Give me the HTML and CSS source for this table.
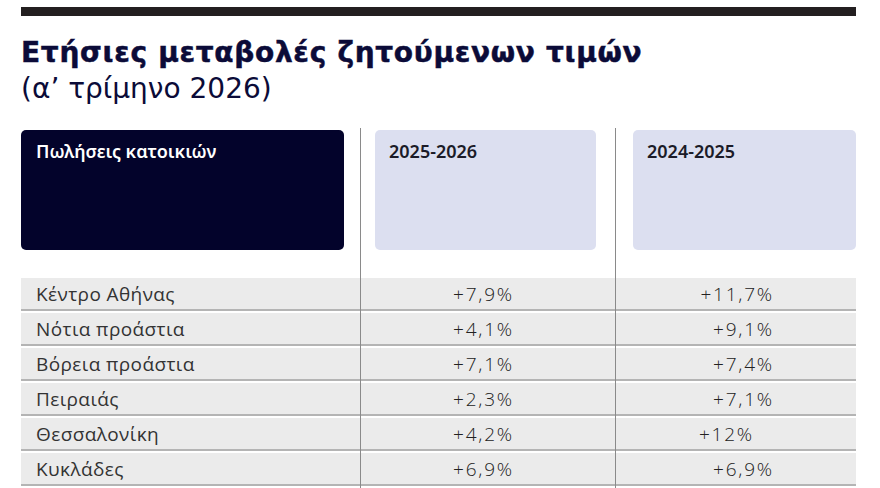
FILE: index.html
```html
<!DOCTYPE html>
<html lang="el">
<head>
<meta charset="utf-8">
<link rel="stylesheet" href="styles.css">
</head>
<body>
<div class="page">
  <div class="bar"></div>
  <h1 class="title">Ετήσιες μεταβολές ζητούμενων τιμών</h1>
  <p class="subtitle">(α’ τρίμηνο 2026)</p>
  <div class="table">
    <div class="vline vline-1"></div>
    <div class="vline vline-2"></div>
    <div class="head">
      <div class="hcell hcell-dark">Πωλήσεις κατοικιών</div>
      <div class="hcell hcell-light">2025-2026</div>
      <div class="hcell hcell-light">2024-2025</div>
    </div>
    <div class="rows">
      <div class="row"><span class="label">Κέντρο Αθήνας</span><span class="v1">+7,9%</span><span class="v2">+11,7%</span></div>
      <div class="row"><span class="label">Νότια προάστια</span><span class="v1">+4,1%</span><span class="v2">+9,1%</span></div>
      <div class="row"><span class="label">Βόρεια προάστια</span><span class="v1">+7,1%</span><span class="v2">+7,4%</span></div>
      <div class="row"><span class="label">Πειραιάς</span><span class="v1">+2,3%</span><span class="v2">+7,1%</span></div>
      <div class="row"><span class="label">Θεσσαλονίκη</span><span class="v1">+4,2%</span><span class="v2 v2-odd">+12%</span></div>
      <div class="row"><span class="label">Κυκλάδες</span><span class="v1">+6,9%</span><span class="v2">+6,9%</span></div>
    </div>
  </div>
</div>
</body>
</html>
```
FILE: styles.css
```css
html, body {
  margin: 0;
  padding: 0;
  background: #ffffff;
}
.page {
  width: 835px;
  padding: 7px 0 0 21px;
}
.bar {
  height: 9px;
  background: #231f20;
}
.title {
  margin: 21px 0 0 0;
  font-family: "DejaVu Sans", sans-serif;
  font-weight: 700;
  font-size: 28px;
  line-height: 32px;
  color: #0b0b38;
  letter-spacing: 0.7px;
  -webkit-text-stroke: 0.5px #0b0b38;
}
.subtitle {
  margin: 4px 0 0 0;
  font-family: "DejaVu Sans", sans-serif;
  font-weight: 400;
  font-size: 28px;
  line-height: 32px;
  color: #0b0b38;
}
.table {
  position: relative;
  margin-top: 25px;
}
.vline {
  position: absolute;
  top: -2px;
  bottom: -4px;
  width: 1px;
  background: #8a8a8a;
}
.vline-1 { left: 339px; }
.vline-2 { left: 594px; }
.head {
  display: grid;
  grid-template-columns: 323px 221px 223px;
  column-gap: 31px;
  height: 120px;
}
.head .hcell:nth-child(3) {
  margin-left: 6px;
  margin-right: -6px;
}
.hcell {
  border-radius: 5px;
  padding: 8px 14px;
  font-family: "Noto Sans", sans-serif;
  font-weight: 600;
  font-size: 18px;
  line-height: 26px;
}
.hcell-dark {
  background: #03032b;
  color: #ffffff;
  padding-left: 15px;
}
.hcell-light {
  background: #dcdff0;
  color: #1b1b28;
}
.rows {
  margin-top: 28px;
}
.row {
  display: grid;
  grid-template-columns: 339px 255px 1fr;
  height: 31px;
  align-items: center;
  background: #ebebeb;
  border-bottom: 2px solid #b4b4b4;
  margin-bottom: 2px;
  font-family: "Open Sans", sans-serif;
  font-weight: 400;
  font-size: 19px;
  color: #333333;
}
.label {
  padding-left: 15px;
  letter-spacing: 0.4px;
}
.v1, .v2 {
  text-align: right;
  letter-spacing: 1.8px;
  font-weight: 300;
  color: #222222;
}
.v1 {
  padding-right: 101px;
}
.v2 {
  padding-right: 82px;
}
.v2-odd {
  padding-right: 102px;
}
```
